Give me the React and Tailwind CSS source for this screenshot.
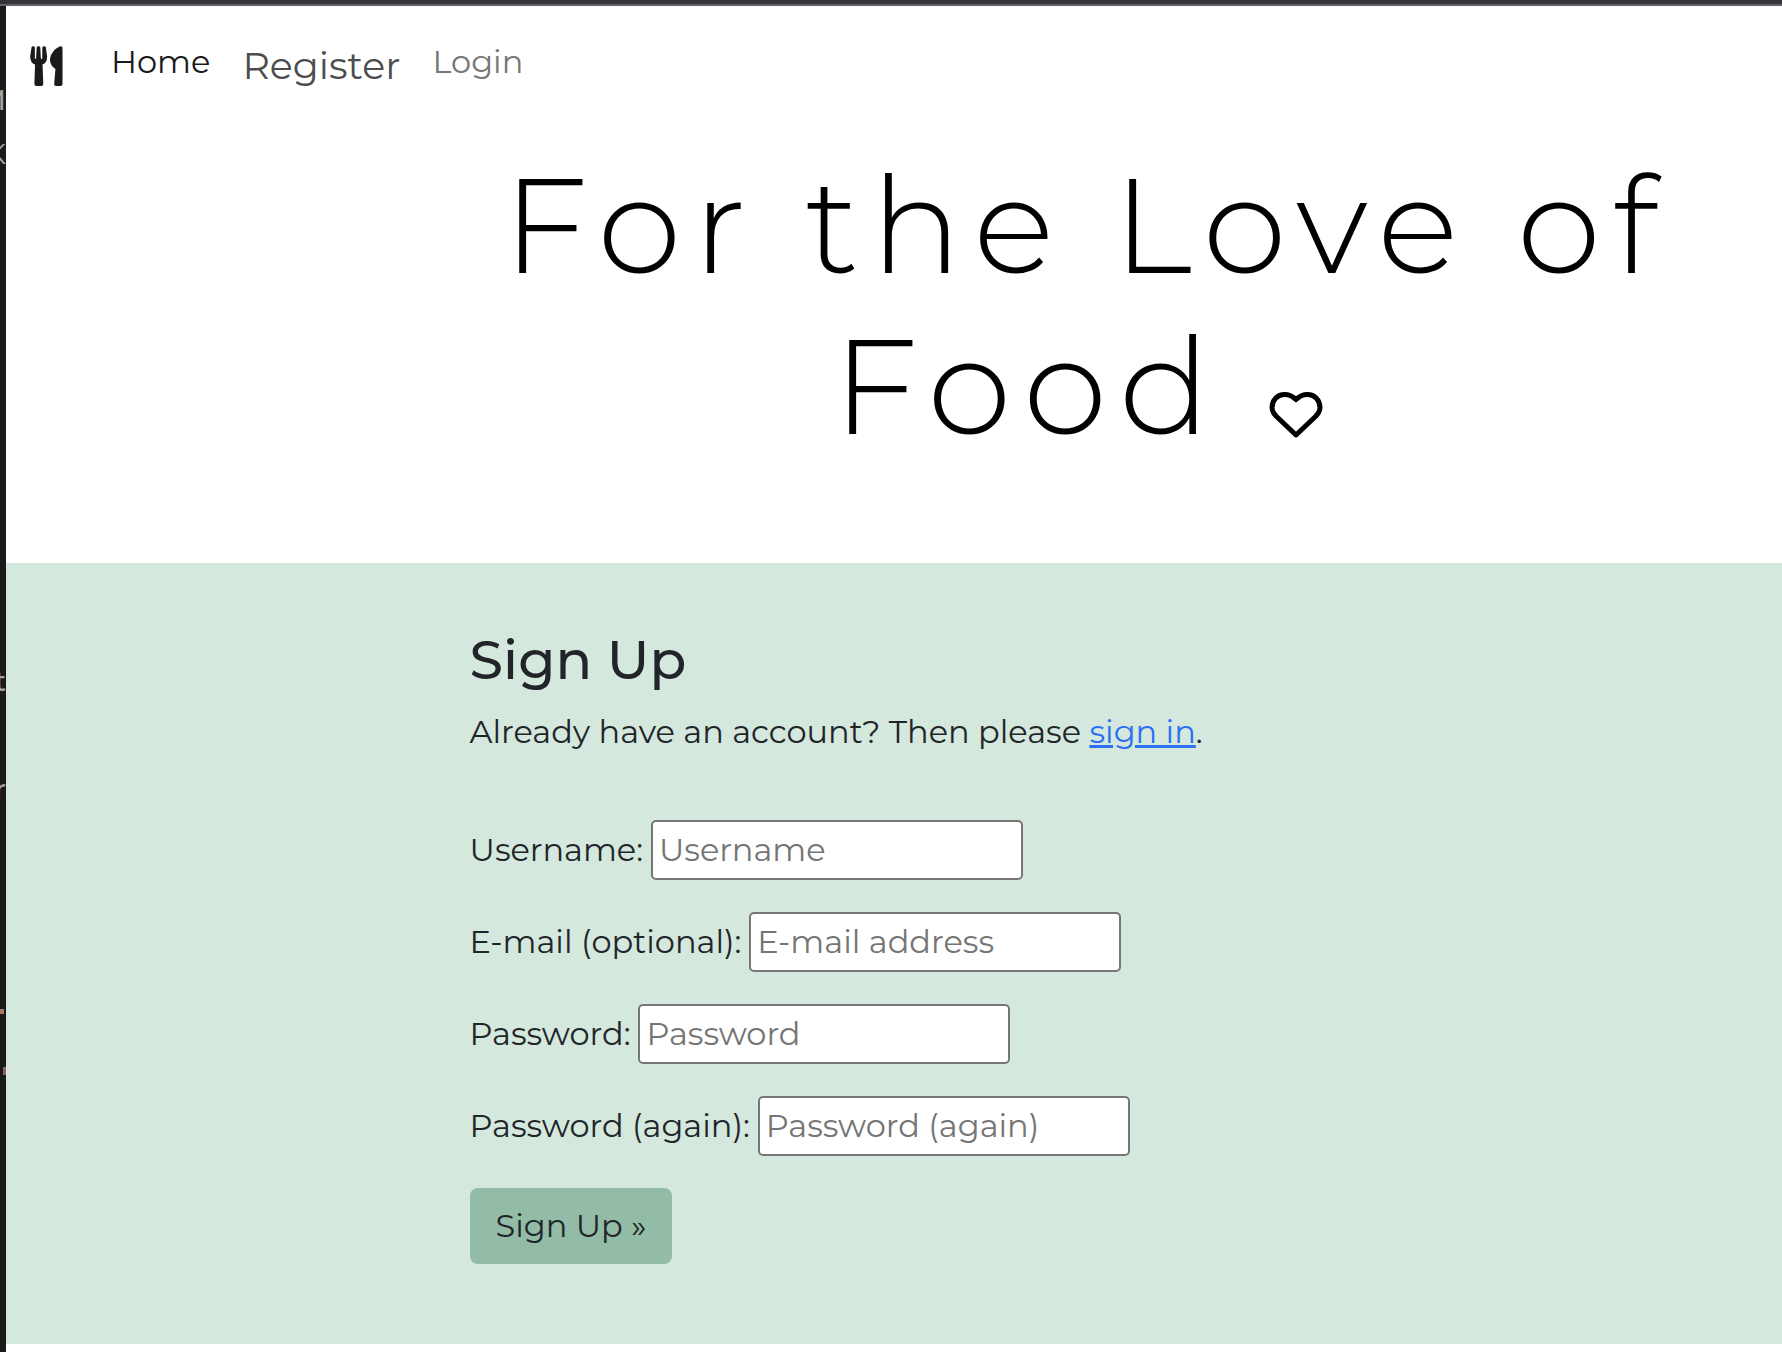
const FIELDS = [
  { id: "username", label: "Username:", placeholder: "Username", type: "text" },
  { id: "email", label: "E-mail (optional):", placeholder: "E-mail address", type: "email" },
  { id: "password1", label: "Password:", placeholder: "Password", type: "password" },
  { id: "password2", label: "Password (again):", placeholder: "Password (again)", type: "password" },
];

function CutleryIcon() {
  return (
    <svg viewBox="0 0 34 42" className="h-10 w-[33px]" preserveAspectRatio="none" fill="#1a1a1a" aria-hidden="true">
      <path d="M1.6 1.2Q1.8 .2 3.2 .2Q5 .2 5 1.5V13.2Q5.6 14 6.3 13.2L6.9 1.3Q7.1 .2 8.8 .2Q10.4 .2 10.6 1.3L11.2 13.2Q12 14 12.6 13.2L12.7 1.5Q12.8 .2 14.6 .2Q16.1 .2 16.3 1.2L17.6 10.5Q18 17.4 12.9 19.5L13.7 39.8Q13.7 42 11.6 42H6.6Q4.5 42 4.5 39.8L5.2 19.5Q-.1 17.4 .2 10.5Z" />
      <path d="M32 .2Q33.5 .2 33.5 1.8V39.8Q33.5 42 31.5 42H27Q24.8 42 24.9 39.8L26.2 24.2Q20.5 20.5 20.6 14.2C20.7 8.5 26.4 1 32 .2Z" />
    </svg>
  );
}

function HeartIcon() {
  return (
    <svg viewBox="0 0 54 48" className="mr-4 inline-block h-12 w-[54px] align-[-4px]" fill="none" stroke="#000" strokeWidth="5" strokeLinejoin="round" aria-hidden="true">
      <path d="M27 45 7.5 26.5C4.5 23.5 3 20.5 3 17.5C3 10 8.5 4.5 15.5 4.5C20 4.5 23.5 6 27 9.5C30.5 6 34 4.5 38.5 4.5C45.5 4.5 51 10 51 17.5C51 20.5 49.5 23.5 46.5 26.5Z" />
    </svg>
  );
}

/* Sliver of the editor window that shows beside the page. */
function EditorEdge() {
  return (
    <div aria-hidden="true" className="flex w-[6px] shrink-0 flex-col items-end overflow-hidden bg-[#1a1a1a] text-[28px] leading-8 text-[#a3a3a3]">
      <span className="mt-[78px] font-medium">M</span>
      <span className="mt-[22px]">K</span>
      <span className="mt-[495px] font-medium">t</span>
      <span className="mt-[76px] font-medium">r</span>
      <span className="mt-[204px] mr-[2px] h-[5px] w-1 bg-[#a87c68]" />
      <span className="mt-[53px] h-2 w-[3px] bg-[#8a6454]" />
    </div>
  );
}

export default function App() {
  return (
    <div className="flex min-h-screen flex-col bg-white font-['Montserrat','Inter',sans-serif] text-[#212529]">
      <div className="h-[6px] shrink-0 border-b-2 border-[#606065] bg-[#343539]" />
      <div className="flex grow">
        <EditorEdge />
        <div className="flex min-w-0 grow flex-col">
          <header>
            <nav className="flex items-start pt-8 pl-6 leading-12">
              <a href="#" aria-label="For the Love of Food" className="mt-2 mr-12">
                <CutleryIcon />
              </a>
              <a href="#" className="mr-8 text-[32px] text-[#1a1a1a]">Home</a>
              <a href="#" className="mt-1 mr-8 text-[38px] text-[#4d4d4d]">Register</a>
              <a href="#" className="text-[32px] text-[#777]">Login</a>
            </nav>
            <h1 className="mt-[54px] mb-[97px] pr-[4.4%] pl-[26%] text-center text-[135px] leading-[161px] font-light tracking-[12px] text-black">
              For the Love of Food <HeartIcon />
            </h1>
          </header>
          <main className="bg-[#d4e8dd] pt-[65px] pb-20 pl-[26.1%] text-[32px] leading-12">
            <h2 className="text-[54px] leading-[64px] font-medium">Sign Up</h2>
            <p className="mt-4">
              Already have an account? Then please{" "}
              <a href="#" className="text-[#2b6ff5] underline decoration-[3px]">sign in</a>.
            </p>
            <form className="mt-16 flex flex-col items-start gap-8">
              {FIELDS.map((f) => (
                <div key={f.id} className="flex items-center gap-2">
                  <label htmlFor={f.id}>{f.label}</label>
                  <input
                    id={f.id}
                    type={f.type}
                    placeholder={f.placeholder}
                    className="h-[60px] w-[372px] rounded-[5px] border-2 border-[#767676] bg-white px-[6px] pb-[2px] placeholder:text-[#757575]"
                  />
                </div>
              ))}
              <button type="submit" className="rounded-lg bg-[#92bca5] px-[26px] py-[14px]">Sign Up »</button>
            </form>
          </main>
        </div>
      </div>
    </div>
  );
}
